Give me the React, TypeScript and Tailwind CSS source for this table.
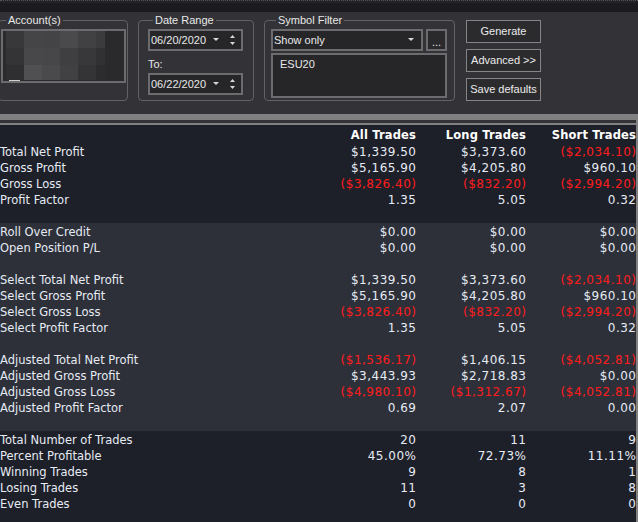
import React from "react";

// Strategy performance summary — dark trading-platform style.

type Row = [string, string, string, string] | null;

const SECTIONS: { bg: string; rows: Row[] }[] = [
  {
    bg: "bg-[#1e2029]",
    rows: [
      ["Total Net Profit", "$1,339.50", "$3,373.60", "($2,034.10)"],
      ["Gross Profit", "$5,165.90", "$4,205.80", "$960.10"],
      ["Gross Loss", "($3,826.40)", "($832.20)", "($2,994.20)"],
      ["Profit Factor", "1.35", "5.05", "0.32"],
      null,
    ],
  },
  {
    bg: "bg-[#2d3039]",
    rows: [
      ["Roll Over Credit", "$0.00", "$0.00", "$0.00"],
      ["Open Position P/L", "$0.00", "$0.00", "$0.00"],
      null,
      ["Select Total Net Profit", "$1,339.50", "$3,373.60", "($2,034.10)"],
      ["Select Gross Profit", "$5,165.90", "$4,205.80", "$960.10"],
      ["Select Gross Loss", "($3,826.40)", "($832.20)", "($2,994.20)"],
      ["Select Profit Factor", "1.35", "5.05", "0.32"],
      null,
      ["Adjusted Total Net Profit", "($1,536.17)", "$1,406.15", "($4,052.81)"],
      ["Adjusted Gross Profit", "$3,443.93", "$2,718.83", "$0.00"],
      ["Adjusted Gross Loss", "($4,980.10)", "($1,312.67)", "($4,052.81)"],
      ["Adjusted Profit Factor", "0.69", "2.07", "0.00"],
      null,
    ],
  },
  {
    bg: "bg-[#1e2029]",
    rows: [
      ["Total Number of Trades", "20", "11", "9"],
      ["Percent Profitable", "45.00%", "72.73%", "11.11%"],
      ["Winning Trades", "9", "8", "1"],
      ["Losing Trades", "11", "3", "8"],
      ["Even Trades", "0", "0", "0"],
    ],
  },
];

const MOSAIC = [
  ["#38383b", "#454547", "#444446", "#4a4a4c", "#414143", "#3b3b3d"],
  ["#343437", "#48484a", "#474749", "#3f3f41", "#38383a", "#313133"],
  ["#2f2f31", "#505052", "#4a4a4c", "#414143", "#343436", "#2c2c2e"],
];

function DropArrow() {
  return (
    <svg width="6" height="4" viewBox="0 0 6 4" className="shrink-0">
      <path d="M0 0h6L3 3z" fill="#d8d8d8" />
    </svg>
  );
}

function Spinner() {
  return (
    <svg width="7" height="12" viewBox="0 0 7 12" className="shrink-0">
      <path d="M3.5 1L6 4H1z" fill="#d8d8d8" />
      <path d="M1 8h5l-2.5 3z" fill="#d8d8d8" />
    </svg>
  );
}

function DateBox({ value }: { value: string }) {
  return (
    <div className="flex items-center w-[95px] h-[22px] border-2 border-[#6c6c6e] bg-[#262629] pl-[1px] pr-[5px]">
      <span className="flex-1 text-[#e8e8e8]">{value}</span>
      <span className="mr-[10px]">
        <DropArrow />
      </span>
      <Spinner />
    </div>
  );
}

function Group({ title, className, children }: { title: string; className: string; children: React.ReactNode }) {
  return (
    <fieldset className={`border border-[#626265] rounded-[4px] h-[88px] ${className}`}>
      <legend className="ml-[5px] px-[2px] leading-[14px] text-[#e8e8e8]">{title}</legend>
      {children}
    </fieldset>
  );
}

function Btn({ label }: { label: string }) {
  return (
    <button className="w-[75px] h-[23px] border border-[#858587] bg-[#2b2b2e] text-[#ececec] leading-[21px] text-center">
      {label}
    </button>
  );
}

function Value({ v }: { v: string }) {
  const neg = v.startsWith("(");
  return (
    <div className="text-right whitespace-nowrap">
      <span
        className={`text-[12px] tracking-[0.5px] mr-[-0.5px] ${neg ? "text-[#ff1c1c]" : "text-[#e6ebf4]"}`}
      >
        {v}
      </span>
    </div>
  );
}

export default function App() {
  return (
    <div className="w-[638px] h-[522px] overflow-hidden bg-[#1e2029] flex flex-col">
      {/* top chrome */}
      <div className="h-[3px] bg-[#232327] border-t border-dotted border-[#55555a]" />
      <div className="h-[9px] bg-[#1b1b1e]" />

      {/* options panel */}
      <div className="h-[102px] bg-[#333337] flex items-start pt-[1px] font-['Liberation_Sans',Arial,sans-serif] text-[11px]">
        <Group title="Account(s)" className="w-[130px] ml-[-2px] pl-[2px] pr-[1px]">
          <div className="mt-[2px] h-[54px] border-2 border-[#6c6c6e] bg-[#2a2a2d] flex flex-col pl-[3px]">
            {MOSAIC.map((row, i) => (
              <div key={i} className={`flex ${i === 2 ? "h-[15px]" : "h-[17px]"}`}>
                {row.map((c, j) => (
                  <div key={j} className={j === 5 ? "w-[9px]" : "w-[18px]"} style={{ backgroundColor: c }} />
                ))}
              </div>
            ))}
            <div className="ml-[3px] w-[11px] h-[1px] bg-[#d0d0d0]" />
          </div>
        </Group>

        <Group title="Date Range" className="w-[116px] ml-[10px] pl-[9px]">
          <div className="mt-[2px]">
            <DateBox value="06/20/2020" />
          </div>
          <div className="mt-[7px] h-[13px] leading-[13px] text-[#e8e8e8]">To:</div>
          <div className="mt-[2px]">
            <DateBox value="06/22/2020" />
          </div>
        </Group>

        <Group title="Symbol Filter" className="w-[191px] ml-[10px] pl-[6px]">
          <div className="mt-[2px] flex gap-[3px]">
            <div className="flex items-center w-[152px] h-[22px] border-2 border-[#6c6c6e] bg-[#262629] pl-[1px] pr-[7px]">
              <span className="flex-1 text-[#e8e8e8]">Show only</span>
              <DropArrow />
            </div>
            <div className="w-[21px] h-[22px] border-2 border-[#6c6c6e] bg-[#2a2a2d] text-[#e8e8e8] text-center leading-[22px]">
              ...
            </div>
          </div>
          <div className="mt-[2px] w-[176px] h-[45px] border-2 border-[#6c6c6e] bg-[#262629] pl-[7px] pt-[3px] text-[#e8e8e8] leading-[13px]">
            ESU20
          </div>
        </Group>

        <div className="ml-[11px] mt-[7px] flex flex-col gap-[6px]">
          <Btn label="Generate" />
          <Btn label="Advanced >>" />
          <Btn label="Save defaults" />
        </div>
      </div>

      {/* splitter */}
      <div className="h-[6px] bg-[#808080]" />

      {/* results grid */}
      <div className="flex-1 flex flex-col border-r-2 border-[#808080] font-['DejaVu_Sans',sans-serif] text-[11.5px] text-[#e6ebf4]">
        <div className="h-[3px] bg-[#333337]" />
        <div className="flex-1 flex flex-col border-t-2 border-[#808080]">
          {SECTIONS.map((sec, si) => (
            <div key={si} className={`${sec.bg} ${si === 2 ? "flex-1" : ""}`}>
              {si === 0 && (
                <div className="grid grid-cols-[306px_110px_110px_110px] h-[18px] pt-[1px] leading-[18px] font-bold text-white text-right tracking-[0.15px]">
                  <div />
                  <div>All Trades</div>
                  <div>Long Trades</div>
                  <div className="whitespace-nowrap">Short Trades</div>
                </div>
              )}
              {sec.rows.map((r, ri) =>
                r ? (
                  <div key={ri} className="grid grid-cols-[306px_110px_110px_110px] h-[16px] pt-[1px] leading-[16px]">
                    <div className="whitespace-nowrap">{r[0]}</div>
                    <Value v={r[1]} />
                    <Value v={r[2]} />
                    <Value v={r[3]} />
                  </div>
                ) : (
                  <div key={ri} className="h-[16px]" />
                )
              )}
            </div>
          ))}
        </div>
      </div>
    </div>
  );
}
